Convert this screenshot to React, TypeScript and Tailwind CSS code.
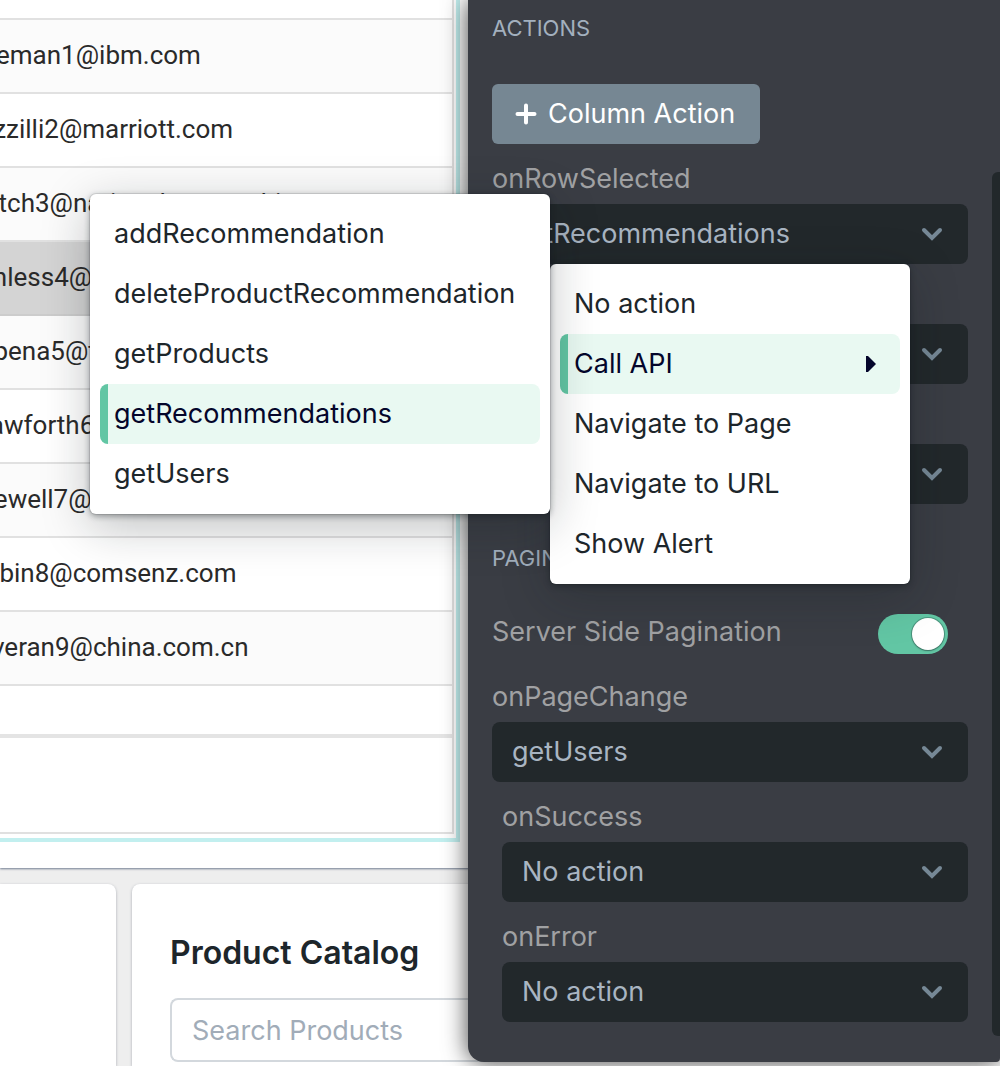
import { useState } from "react";

const rows = [
  "vseman1@ibm.com",
  "fazzilli2@marriott.com",
  "afitch3@nationalgeographic.com",
  "tunless4@va.gov",
  "fdpena5@tmall.com",
  "jcawforth6@nih.gov",
  "foewell7@ask.com",
  "bobin8@comsenz.com",
  "tsveran9@china.com.cn",
];

const apis = [
  "addRecommendation",
  "deleteProductRecommendation",
  "getProducts",
  "getRecommendations",
  "getUsers",
];

const actions = [
  "No action",
  "Call API",
  "Navigate to Page",
  "Navigate to URL",
  "Show Alert",
];

const menuClass =
  "absolute z-20 rounded-[6px] bg-white p-[10px] text-[#1d262b] shadow-[0_0_0_1px_rgba(16,22,26,0.1),0_2px_6px_rgba(16,22,26,0.4),0_12px_48px_rgba(16,22,26,0.25)]";

function Chevron() {
  return (
    <svg
      className="pointer-events-none absolute right-[24px] top-[18px]"
      width="24"
      height="24"
      viewBox="0 0 24 24"
      fill="none"
      stroke="#768896"
      strokeWidth="4"
      strokeLinecap="round"
      aria-hidden="true"
    >
      <path d="M4 8 L12 16 L20 8" />
    </svg>
  );
}

function Field({
  id,
  label,
  value,
  nested = false,
  children,
}: {
  id: string;
  label: string;
  value: string;
  nested?: boolean;
  children?: React.ReactNode;
}) {
  return (
    <div className={nested ? "pl-[10px]" : ""}>
      <label
        htmlFor={id}
        className="flex h-[60px] items-end leading-[50px] text-[#a0a1a3]"
      >
        {label}
      </label>
      <div className="relative">
        <select
          id={id}
          defaultValue={value}
          className="block h-[60px] w-full appearance-none rounded-[8px] bg-[#22282b] px-[20px] text-[#a9b5c2] outline-none"
        >
          {["No action", ...apis].map((option) => (
            <option key={option}>{option}</option>
          ))}
        </select>
        <Chevron />
        {children}
      </div>
    </div>
  );
}

function MenuItem({
  label,
  active,
  submenu = false,
}: {
  label: string;
  active: boolean;
  submenu?: boolean;
}) {
  return (
    <li>
      <button
        type="button"
        className={
          active
            ? "flex h-[60px] w-full items-center justify-between rounded-[8px] border-l-8 border-[#62c6a4] bg-[#e9f9f2] pl-[6px] pr-[24px] text-left text-[#04062b]"
            : "flex h-[60px] w-full items-center pl-[14px] text-left whitespace-nowrap"
        }
      >
        {label}
        {submenu && (
          <svg width="10" height="16" viewBox="0 0 10 16" aria-hidden="true">
            <path d="M0 0 H2 L10 8 L2 16 H0 Z" fill="#04062b" />
          </svg>
        )}
      </button>
    </li>
  );
}

function ActionMenus() {
  return (
    <div className="absolute right-[58px] top-full z-20 w-[360px]">
      <ul className={menuClass + " w-full"}>
        {actions.map((label) => (
          <MenuItem
            key={label}
            label={label}
            active={label === "Call API"}
            submenu={label === "Call API"}
          />
        ))}
      </ul>
      <ul className={menuClass + " -top-[70px] right-full w-[460px]"}>
        {apis.map((label) => (
          <MenuItem
            key={label}
            label={label}
            active={label === "getRecommendations"}
          />
        ))}
      </ul>
    </div>
  );
}

function PropertyPane() {
  const [serverSide, setServerSide] = useState(true);
  return (
    <aside className="relative z-10 w-[532px] shrink-0 self-start rounded-bl-[16px] rounded-br-[4px] bg-[#3a3d44] pb-10 pl-6 pr-8 text-[27px] shadow-[0_0_24px_rgba(0,0,0,0.75)]">
      <h2 className="flex h-14 items-center text-[22px] text-[#a3b0be]">ACTIONS</h2>
      <button
        type="button"
        className="mt-7 flex h-[60px] w-[268px] items-center gap-[10px] rounded-[6px] bg-[#768793] pl-[22px] text-white"
      >
        <svg
          width="24"
          height="24"
          viewBox="0 0 24 24"
          stroke="white"
          strokeWidth="4"
          strokeLinecap="round"
          aria-hidden="true"
        >
          <path d="M3.500 12 H20.500 M12 3.500 V20.500" />
        </svg>
        Column Action
      </button>
      <Field id="row-selected" label="onRowSelected" value="getRecommendations">
        <ActionMenus />
      </Field>
      <Field id="row-success" label="onSuccess" value="No action" nested />
      <Field id="row-error" label="onError" value="No action" nested />
      <h2 className="mt-[26px] flex h-14 items-center text-[22px] text-[#a3b0be]">
        PAGINATION
      </h2>
      <div className="mt-5 flex h-14 items-center justify-between pr-5">
        <label htmlFor="server-side" className="pb-[3px] text-[#a0a1a3]">
          Server Side Pagination
        </label>
        <input
          id="server-side"
          type="checkbox"
          role="switch"
          checked={serverSide}
          onChange={(e) => setServerSide(e.target.checked)}
          className="flex h-10 w-[70px] appearance-none items-center rounded-full bg-[#768793] p-1 before:size-8 before:rounded-full before:bg-white before:shadow-[0_0_0_1px_rgba(16,22,26,0.25),0_1px_2px_rgba(16,22,26,0.3)] checked:justify-end checked:bg-[#62c6a4]"
        />
      </div>
      <Field id="page-change" label="onPageChange" value="getUsers" />
      <Field id="page-success" label="onSuccess" value="No action" nested />
      <Field id="page-error" label="onError" value="No action" nested />
      <div className="absolute bottom-[26px] right-0 top-[172px] w-2 rounded-l-[6px] bg-[#22282b]" />
    </aside>
  );
}

function Canvas() {
  return (
    <main className="-mr-8 flex min-w-0 flex-1 flex-col overflow-hidden bg-[#eeeeee]">
      <section className="bg-white pb-[26px] shadow-[0_1px_2px_rgba(60,75,105,0.7)]">
        <div className="mr-10 border-b-4 border-r-4 border-[#c2efef] pb-1 pr-[2px]">
          <div className="border-b-2 border-r-2 border-[#e0e0e0]">
            <table className="w-full table-fixed border-collapse font-['Roboto',sans-serif] text-[26px] text-[#2a2a2a]">
              <tbody>
                <tr className="h-[19px] border-b-2 border-[#e1e1e1]">
                  <td className="p-0" />
                </tr>
                {rows.map((email, i) => (
                  <tr
                    key={email}
                    className={
                      i === 3
                        ? "h-[74px] border-b-2 border-[#cccccc] bg-[#d4d4d4]"
                        : "h-[74px] border-b-2 border-[#e1e1e1] odd:bg-white even:bg-[#fbfbfb]"
                    }
                  >
                    <td className="p-0 pb-[2px] whitespace-nowrap">
                      <span className="-ml-[30px]">{email}</span>
                    </td>
                  </tr>
                ))}
              </tbody>
            </table>
            <div className="h-[52px] border-b-4 border-[#e4e4e4]" />
            <div className="h-[94px]" />
          </div>
        </div>
      </section>
      <div className="mt-4 flex flex-1 gap-4">
        <section className="w-[116px] shrink-0 rounded-tr-[8px] bg-white shadow-[0_1px_3px_rgba(60,70,90,0.4)]" />
        <section className="min-w-0 flex-1 rounded-tl-[8px] bg-white pb-1 pl-[38px] pt-[50px] shadow-[0_1px_3px_rgba(60,70,90,0.4)]">
          <h1 className="text-[32px] font-semibold leading-[38px] text-[#1d262b]">
            Product Catalog
          </h1>
          <input
            type="search"
            aria-label="Search Products"
            placeholder="Search Products"
            className="mt-[26px] block h-16 w-full rounded-l-[8px] border-2 border-r-0 border-[#d3d8dd] px-5 text-[27px] outline-none placeholder:text-[#a1acb8]"
          />
        </section>
      </div>
    </main>
  );
}

export default function App() {
  return (
    <div className="flex min-h-screen overflow-hidden font-['Inter',sans-serif]">
      <Canvas />
      <PropertyPane />
    </div>
  );
}
